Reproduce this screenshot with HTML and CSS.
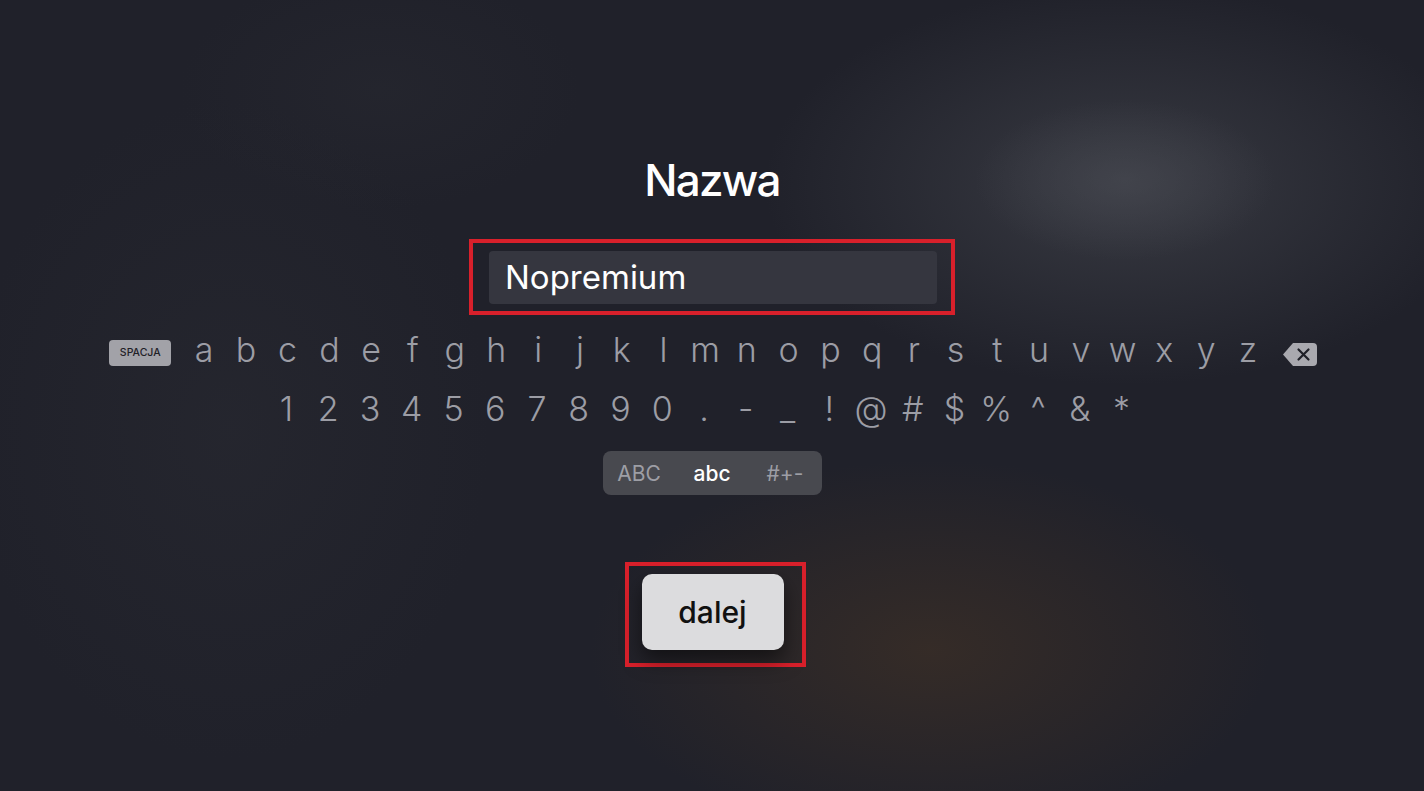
FILE: index.html
```html
<!DOCTYPE html>
<html lang="pl">
<head>
    <meta charset="UTF-8">
    <meta name="viewport" content="width=device-width, initial-scale=1.0">
    <title>Nazwa</title>
    <link rel="stylesheet" href="styles.css">
</head>
<body>

<div class="screen">
    <h1 class="title">Nazwa</h1>

    <!-- Pole tekstowe z zaznaczeniem -->
    <div class="mark mark-input">
        <div class="field">Nopremium</div>
    </div>

    <!-- Klawiatura -->
    <div class="keys-row letters">
        <span class="space-key">SPACJA</span>
        <span class="key">a</span><span class="key">b</span><span class="key">c</span><span class="key">d</span>
        <span class="key">e</span><span class="key">f</span><span class="key">g</span><span class="key">h</span>
        <span class="key">i</span><span class="key">j</span><span class="key">k</span><span class="key">l</span>
        <span class="key">m</span><span class="key">n</span><span class="key">o</span><span class="key">p</span>
        <span class="key">q</span><span class="key">r</span><span class="key">s</span><span class="key">t</span>
        <span class="key">u</span><span class="key">v</span><span class="key">w</span><span class="key">x</span>
        <span class="key">y</span><span class="key">z</span>
        <span class="delete-key">
            <svg width="34" height="23" viewBox="0 0 34 23">
                <path d="M10 0 H30 Q34 0 34 4 V19 Q34 23 30 23 H10 L0 11.5 Z" fill="#a9a9af"/>
                <path d="M15.5 6.5 L25.5 16.5 M25.5 6.5 L15.5 16.5" stroke="#1f2028" stroke-width="2.2" stroke-linecap="round"/>
            </svg>
        </span>
    </div>

    <div class="keys-row symbols">
        <span class="key">1</span><span class="key">2</span><span class="key">3</span><span class="key">4</span>
        <span class="key">5</span><span class="key">6</span><span class="key">7</span><span class="key">8</span>
        <span class="key">9</span><span class="key">0</span><span class="key">.</span><span class="key">-</span>
        <span class="key">_</span><span class="key">!</span><span class="key">@</span><span class="key">#</span>
        <span class="key">$</span><span class="key">%</span><span class="key">^</span><span class="key">&amp;</span>
        <span class="key">*</span>
    </div>

    <div class="modes">
        <span class="mode">ABC</span>
        <span class="mode active">abc</span>
        <span class="mode">#+-</span>
    </div>

    <!-- Przycisk dalej z zaznaczeniem -->
    <div class="mark mark-button">
        <button class="next">dalej</button>
    </div>
</div>

</body>
</html>
```

FILE: styles.css
```css
html, body {
    margin: 0;
    height: 100%;
}
body {
    overflow: hidden;
    font-family: Inter, "Noto Sans", sans-serif;
    color: #fff;
    background-color: #20212a;
    background-image:
        radial-gradient(ellipse 150px 80px at 1125px 180px, rgba(72, 74, 82, 0.6), rgba(72, 74, 82, 0) 100%),
        radial-gradient(ellipse 360px 200px at 1125px 185px, rgba(62, 64, 72, 0.8), rgba(62, 64, 72, 0) 100%),
        radial-gradient(ellipse 340px 190px at 930px 650px, rgba(62, 48, 38, 0.7), rgba(62, 48, 38, 0) 100%),
        radial-gradient(ellipse 260px 330px at 230px 430px, rgba(40, 41, 49, 0.6), rgba(40, 41, 49, 0) 100%),
        radial-gradient(ellipse 200px 120px at 380px 90px, rgba(40, 41, 49, 0.5), rgba(40, 41, 49, 0) 100%);
}
.screen {
    display: flex;
    flex-direction: column;
    align-items: center;
    padding-top: 152px;
}
.title {
    margin: 0;
    font-size: 44px;
    line-height: 56px;
    font-weight: 500;
    letter-spacing: -1.8px;
}
.mark {
    border: 4px solid #d8202b;
    box-sizing: border-box;
}
.mark-input {
    margin-top: 31px;
    width: 486px;
    height: 76px;
    padding: 8px 14px 7px 16px;
}
.field {
    height: 53px;
    line-height: 53px;
    padding-left: 16px;
    border-radius: 4px;
    background-color: #35363f;
    font-size: 33px;
    font-weight: 400;
}
.keys-row {
    display: flex;
    align-items: flex-start;
    font-size: 34px;
    line-height: 44px;
    font-weight: 300;
    color: #9c9da5;
}
.letters {
    margin-top: 13px;
    padding-left: 2px;
}
.symbols {
    margin-top: 15px;
    padding-right: 16px;
}
.key {
    width: 41.76px;
    text-align: center;
}
.space-key {
    width: 62px;
    height: 26px;
    margin: 12px 12px 0 0;
    border-radius: 4px;
    background-color: #a2a2a8;
    color: #1f2027;
    font-size: 10.5px;
    line-height: 26px;
    font-weight: 500;
    text-align: center;
}
.delete-key {
    display: flex;
    margin: 15px 0 0 14px;
}
.modes {
    display: flex;
    margin-top: 20px;
    border-radius: 8px;
    background-color: #48494f;
}
.mode {
    width: 73px;
    height: 44px;
    line-height: 46px;
    text-align: center;
    font-size: 21px;
    color: #9d9ea5;
}
.mode.active {
    color: #fff;
    font-weight: 500;
}
.mark-button {
    margin-top: 67px;
    margin-left: 6px;
    width: 181px;
    height: 105px;
    padding: 7px 18px 14px 13px;
}
.next {
    display: block;
    width: 142px;
    height: 76px;
    margin-top: 1px;
    border: none;
    border-radius: 10px;
    background-color: #dcdcde;
    color: #111;
    font-family: Inter, "Noto Sans", sans-serif;
    font-size: 30px;
    line-height: 76px;
    font-weight: 500;
    padding: 0;
    box-shadow: 0 10px 20px rgba(0, 0, 0, 0.5);
}
```
